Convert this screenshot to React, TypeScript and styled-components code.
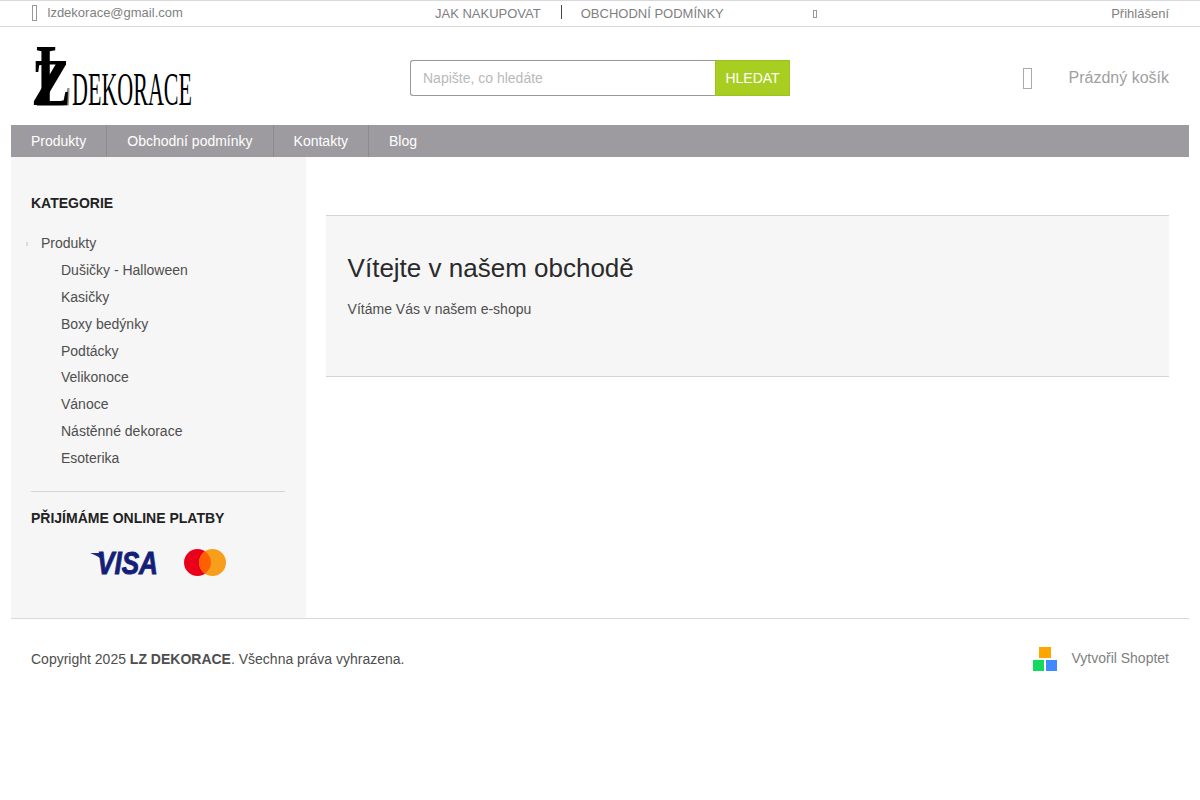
import React from "react";
import styled, { createGlobalStyle } from "styled-components";

const Global = createGlobalStyle`
  html, body { margin: 0; padding: 0; background: #fff; }
  body { font-family: "Liberation Sans", Arial, sans-serif; font-size: 14px; color: #4e4e4e; }
  * { box-sizing: border-box; }
`;

const Page = styled.div`
  width: 1200px;
  height: 800px;
  overflow: hidden;
`;

const TopBar = styled.div`
  height: 27px;
  border-top: 1px solid #d9d9d9;
  border-bottom: 1px solid #d9d9d9;
  padding: 0 31px;
  display: flex;
  align-items: flex-start;
  font-size: 13px;
  color: #7f7f7f;
`;

const Contact = styled.div`
  width: 404px;
  display: flex;
  align-items: center;
  gap: 10.5px;
  height: 23px;
  padding-left: 1px;
`;

const Tofu = styled.span<{ $w: number; $h: number; $color?: string }>`
  display: inline-block;
  flex: none;
  width: ${(p) => p.$w}px;
  height: ${(p) => p.$h}px;
  border: 1px solid ${(p) => p.$color ?? "#999"};
`;

const TopLinks = styled.div`
  width: 378px;
  display: flex;
  align-items: flex-start;
  height: 25px;
  padding-top: 5px;
`;

const TopLink = styled.span`
  line-height: 15px;
`;

const TopDivider = styled.span`
  width: 1px;
  height: 14px;
  margin: -1px 19px 0 20px;
  background: #444;
`;

const TopIcon = styled.div`
  padding-top: 9px;
  line-height: 0;
`;

const Login = styled.span`
  margin-left: auto;
  margin-top: 5px;
  line-height: 15px;
`;

const Header = styled.header`
  height: 98px;
  padding: 0 31px;
  display: flex;
  align-items: center;
`;

const LogoBox = styled.div`
  width: 379px;
  height: 98px;
  padding-top: 16px;
  line-height: 0;
`;

const Search = styled.form`
  width: 380px;
  height: 36px;
  display: flex;
  margin-top: 4px;
`;

const SearchInput = styled.input`
  flex: 1;
  min-width: 0;
  height: 36px;
  border: 1px solid #999;
  border-right: 0;
  border-radius: 3px 0 0 3px;
  padding: 0 12px;
  font: 14px "Liberation Sans", Arial, sans-serif;
  outline: none;
  &::placeholder { color: #b9b9b9; opacity: 1; }
`;

const SearchButton = styled.button`
  width: 75px;
  height: 36px;
  border: 1px solid #9fc31c;
  background: #a8ce22;
  color: #fff;
  font: 14px "Liberation Sans", Arial, sans-serif;
  padding: 0;
`;

const Cart = styled.div`
  margin-left: auto;
  margin-top: 4px;
  display: flex;
  align-items: center;
  gap: 37px;
  font-size: 16px;
  color: #9f9f9f;
`;

const Nav = styled.nav`
  margin: 0 11px;
  height: 32px;
  background: #9d9ba0;
  display: flex;
`;

const NavItem = styled.a`
  padding: 0 20px;
  line-height: 32px;
  color: #fff;
  font-size: 14px;
  border-right: 1px solid #8c8a8f;
  &:last-child { border-right: 0; }
`;

const Main = styled.div`
  margin: 0 11px;
  height: 461px;
  display: flex;
`;

const Sidebar = styled.aside`
  width: 295px;
  background: #f6f6f6;
  padding: 38px 20px 0;
`;

const SideTitle = styled.h4`
  margin: 0;
  font-size: 14px;
  line-height: 16px;
  font-weight: 700;
  color: #222;
`;

const CatList = styled.ul`
  list-style: none;
  margin: 19.15px 0 0;
  padding: 0;
`;

const CatRoot = styled.li`
  position: relative;
  padding-left: 10px;
  line-height: 26.85px;
  height: 26.85px;
  &::before {
    content: "";
    position: absolute;
    left: -5px;
    top: 12px;
    width: 2px;
    height: 4px;
    background: #ddd;
  }
`;

const CatItem = styled.li`
  padding-left: 30px;
  line-height: 26.85px;
  height: 26.85px;
`;

const SideRule = styled.div`
  margin-top: 19.35px;
  border-top: 1px solid #d4d4d4;
  width: 254px;
`;

const PayTitle = styled(SideTitle)`
  margin-top: 18px;
`;

const PayRow = styled.div`
  margin-top: 23px;
  display: flex;
  align-items: center;
  padding-left: 59px;
  gap: 24px;
  line-height: 0;
`;

const Content = styled.main`
  flex: 1;
  padding: 58px 20px 0;
`;

const Welcome = styled.section`
  height: 162px;
  background: #f6f6f6;
  border-top: 1px solid #d4d4d4;
  border-bottom: 1px solid #d4d4d4;
  padding: 35px 21.6px;
`;

const WelcomeTitle = styled.h1`
  margin: 0;
  font-size: 26px;
  line-height: 34px;
  font-weight: 400;
  color: #2a2a2a;
`;

const WelcomeText = styled.p`
  margin: 14px 0 0;
  line-height: 20px;
`;

const Footer = styled.footer`
  margin: 0 11px;
  height: 80px;
  border-top: 1px solid #d9d9d9;
  padding: 0 20px;
  display: flex;
  align-items: center;
  justify-content: space-between;
`;

const Copy = styled.div`
  margin-top: 1px;
`;

const Credit = styled.div`
  display: flex;
  align-items: center;
  gap: 14px;
  color: #7f7f7f;
  line-height: 0;
`;

const CreditText = styled.span`
  line-height: 16px;
  margin-top: -1px;
`;

const Logo = () => (
  <svg width="165" height="68" viewBox="0 0 165 68" fontFamily="'Liberation Serif', serif" style={{ overflow: "visible" }}>
    <defs>
      <linearGradient id="zg" x1="0" x2="1" y1="0" y2="0">
        <stop offset="0.68" stopColor="#000" />
        <stop offset="1" stopColor="#d8d8d8" />
      </linearGradient>
    </defs>
    <text x="5" y="62" fontSize="88" fontWeight="700" textLength="36" lengthAdjust="spacingAndGlyphs" fill="url(#zg)">L</text>
    <text x="0" y="62" fontSize="68" fontWeight="700" textLength="40" lengthAdjust="spacingAndGlyphs" fill="#000">Z</text>
    <text x="41" y="62" fontSize="47" textLength="120" lengthAdjust="spacingAndGlyphs" fill="#000">DEKORACE</text>
  </svg>
);

const Visa = () => (
  <svg width="70" height="26" viewBox="0 0 70 26" fontFamily="'Liberation Sans', sans-serif" style={{ overflow: "visible" }}>
    <path d="M0 3 H10 L13 11 C10 7 5 5 0 3Z" fill="#1a2a78" />
    <text x="7" y="24" fontSize="31" fontWeight="700" fontStyle="italic" textLength="61" lengthAdjust="spacingAndGlyphs" fill="#142078" stroke="#142078" strokeWidth="0.9">VISA</text>
  </svg>
);

const Mastercard = () => (
  <svg width="42" height="27" viewBox="0 0 42 27">
    <circle cx="13.500" cy="13.500" r="13.500" fill="#eb001b" />
    <circle cx="28.500" cy="13.500" r="13.500" fill="#f79e1b" />
    <path d="M21 2.300 A13.500 13.500 0 0 1 21 24.700 A13.500 13.500 0 0 1 21 2.300Z" fill="#ff5f00" />
  </svg>
);

const ShoptetMark = () => (
  <svg width="24" height="24" viewBox="0 0 24 24">
    <rect x="6" y="0" width="12" height="11" fill="#ffa500" />
    <rect x="0" y="13" width="11" height="11" fill="#14d95f" />
    <rect x="13" y="13" width="11" height="11" fill="#3d8bff" />
  </svg>
);

const categories = [
  "Dušičky - Halloween",
  "Kasičky",
  "Boxy bedýnky",
  "Podtácky",
  "Velikonoce",
  "Vánoce",
  "Nástěnné dekorace",
  "Esoterika",
];

export default function App() {
  return (
    <Page>
      <Global />
      <TopBar>
        <Contact>
          <Tofu $w={5} $h={16} />
          <span>lzdekorace@gmail.com</span>
        </Contact>
        <TopLinks>
          <TopLink>JAK NAKUPOVAT</TopLink>
          <TopDivider />
          <TopLink>OBCHODNÍ PODMÍNKY</TopLink>
        </TopLinks>
        <TopIcon>
          <Tofu $w={4} $h={8} />
        </TopIcon>
        <Login>Přihlášení</Login>
      </TopBar>
      <Header>
        <LogoBox>
          <Logo />
        </LogoBox>
        <Search onSubmit={(e) => e.preventDefault()}>
          <SearchInput placeholder="Napište, co hledáte" />
          <SearchButton type="button">HLEDAT</SearchButton>
        </Search>
        <Cart>
          <Tofu $w={9} $h={21} $color="#aaa" />
          <span>Prázdný košík</span>
        </Cart>
      </Header>
      <Nav>
        <NavItem>Produkty</NavItem>
        <NavItem>Obchodní podmínky</NavItem>
        <NavItem>Kontakty</NavItem>
        <NavItem>Blog</NavItem>
      </Nav>
      <Main>
        <Sidebar>
          <SideTitle>KATEGORIE</SideTitle>
          <CatList>
            <CatRoot>Produkty</CatRoot>
            {categories.map((c) => (
              <CatItem key={c}>{c}</CatItem>
            ))}
          </CatList>
          <SideRule />
          <PayTitle>PŘIJÍMÁME ONLINE PLATBY</PayTitle>
          <PayRow>
            <Visa />
            <Mastercard />
          </PayRow>
        </Sidebar>
        <Content>
          <Welcome>
            <WelcomeTitle>Vítejte v našem obchodě</WelcomeTitle>
            <WelcomeText>Vítáme Vás v našem e-shopu</WelcomeText>
          </Welcome>
        </Content>
      </Main>
      <Footer>
        <Copy>
          Copyright 2025 <strong>LZ DEKORACE</strong>. Všechna práva vyhrazena.
        </Copy>
        <Credit>
          <ShoptetMark />
          <CreditText>Vytvořil Shoptet</CreditText>
        </Credit>
      </Footer>
    </Page>
  );
}
